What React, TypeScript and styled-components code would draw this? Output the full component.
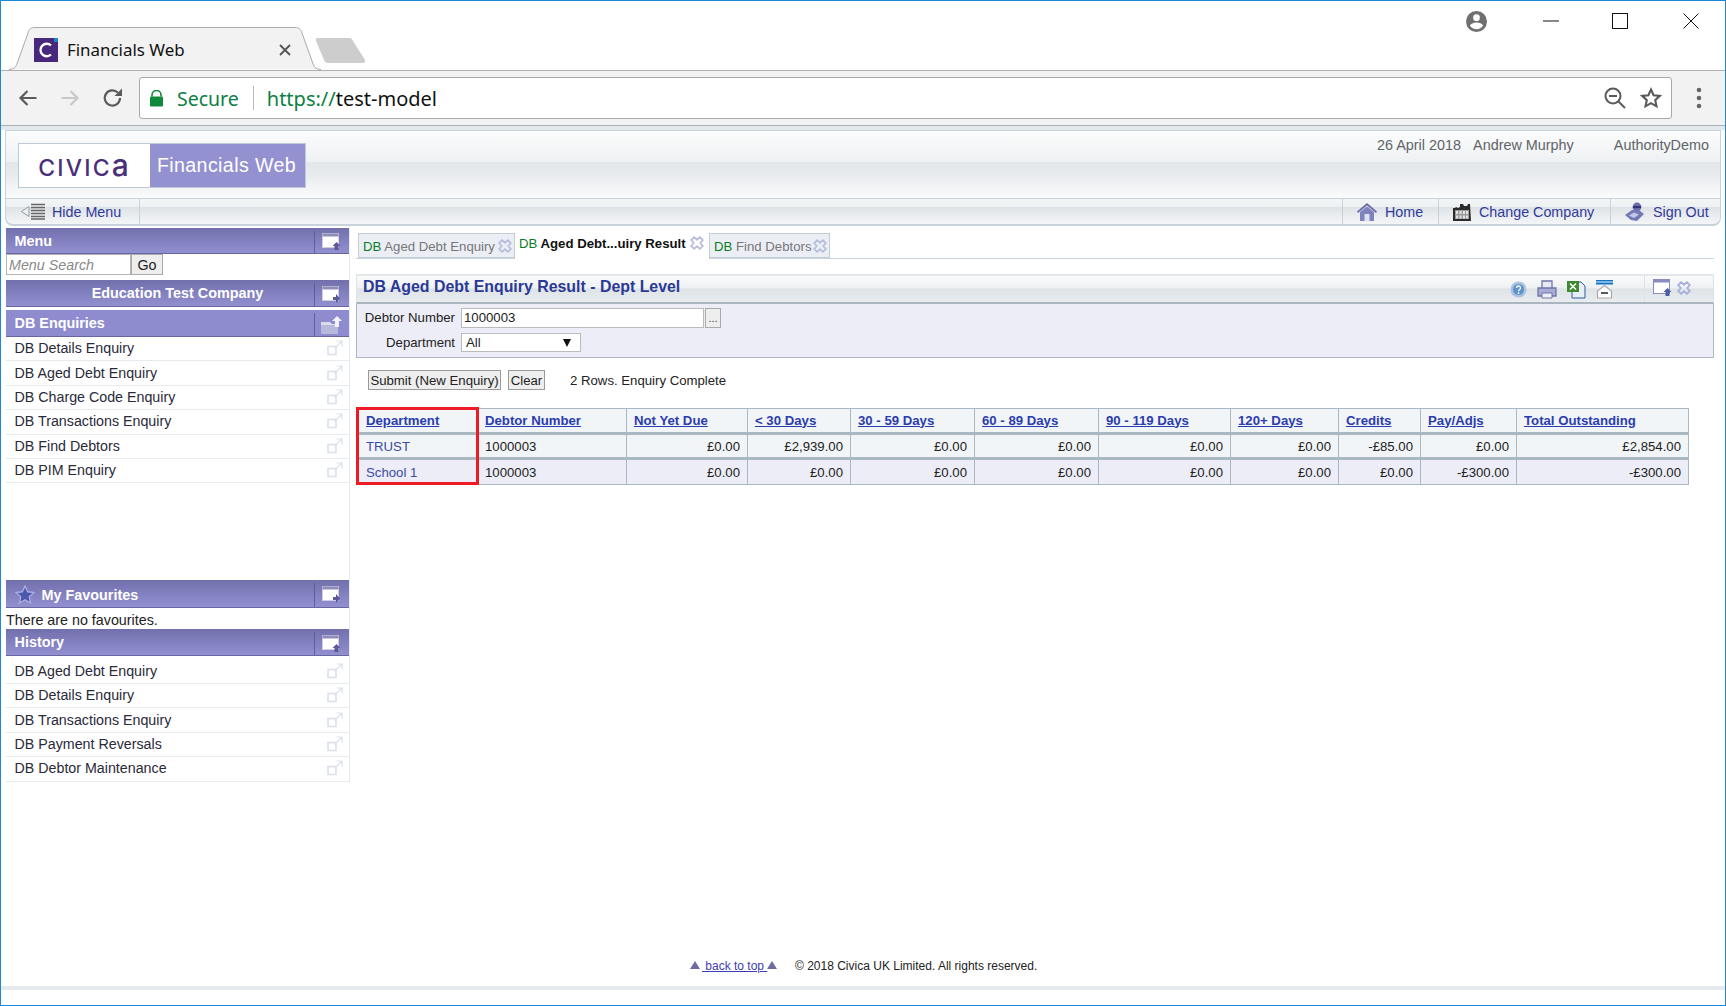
import React from 'react';
import styled, { createGlobalStyle } from 'styled-components';

const Global = createGlobalStyle`
  html, body { margin: 0; padding: 0; background: #fff; }
  body { font-family: "Liberation Sans", Arial, sans-serif; font-size: 13.2px; color: #222; }
  * { box-sizing: border-box; }
`;

const Frame = styled.div`
  width: 1726px; height: 1006px; border: 1px solid #1e88d8;
  display: flex; flex-direction: column; overflow: hidden; background: #fff;
`;
const TitleBar = styled.div`
  height: 69px; flex: none; display: flex; align-items: flex-end; padding-left: 8px; position: relative;
`;
const Tab = styled.div`
  width: 312px; height: 43px; display: flex; align-items: center; gap: 9px; padding: 2px 30px 0 25px; position: relative;
  font-family: "Noto Sans", sans-serif; font-size: 16.9px; color: #111;
  & > svg.shape { position: absolute; left: 0; top: 0; }
  & > *:not(.shape) { position: relative; }
`;
const TabTitle = styled.span` flex: 1; white-space: nowrap; `;
const NewTab = styled.div`
  width: 51px; height: 26px; margin: 0 0 6px -6px;
  & svg { display: block; }
`;
const WindowControls = styled.div`
  margin-left: auto; align-self: flex-start; display: flex; align-items: center; height: 40px; padding-right: 26px;
`;
const WinBtn = styled.div<{ $ml: number }>` margin-left: ${p => p.$ml}px; height: 16px; display: flex; align-items: center; `;

const Toolbar = styled.div`
  height: 56px; flex: none; background: #f2f2f2; border-top: 1px solid #b0b0b0; border-bottom: 1px solid #b0b0b0;
  display: flex; align-items: center; padding: 0 18px 0 17px;
`;
const NavIcons = styled.div` display: flex; align-items: center; gap: 22px; width: 121px; `;
const Omnibox = styled.div`
  width: 1533px; height: 42px; background: #fff; border: 1px solid #a9a9a9; border-radius: 3px;
  display: flex; align-items: center; padding: 0 8px 0 10px; font-family: "Noto Sans", sans-serif; font-size: 19.5px;
`;
const Secure = styled.span` color: #0b8043; margin-left: 14px; `;
const Sep = styled.span` width: 1px; height: 24px; background: #bbb; margin: 0 13px 0 14px; `;
const Scheme = styled.span` color: #0b8043; font-size: 20px; `;
const Url = styled.span` color: #111; flex: 1; font-size: 20px; `;
const OmniIcons = styled.div` display: flex; align-items: center; gap: 14px; margin-right: 1px; `;
const Dots = styled.div` margin-left: 24px; display: flex; `;

const Page = styled.div`
  flex: 1; min-height: 0; display: flex; flex-direction: column; padding: 4px 4px 0 4px;
  background: linear-gradient(#e3e8ec 0, #e3e8ec 4px, #fff 4px);
`;
const AppHeader = styled.div`
  height: 68px; flex: none; border: 1px solid #c7d2da; border-bottom: none;
  background: linear-gradient(#fbfcfc 0, #eef1f3 47%, #e2e6e9 47%, #e8ebee 65%, #fafbfb 100%);
  display: flex; padding: 5px 11px 0 12px; justify-content: space-between;
`;
const LogoBox = styled.div`
  display: flex; width: 288px; height: 45px; margin-top: 7px; border: 1px solid #c0cad6;
`;
const LogoWhite = styled.div`
  width: 131px; background: #fff; display: flex; align-items: baseline; justify-content: center; padding: 4px 2px 0 0;
  font-family: Inter, sans-serif; font-weight: 500; font-size: 23px; letter-spacing: 2.2px; color: #4a2f78; line-height: 34px;
`;
const LogoA = styled.span` font-size: 30px; letter-spacing: 0; `;
const LogoPurple = styled.div`
  flex: 1; background: #9391cf; color: #fff; display: flex; align-items: center; justify-content: center; font-size: 19.6px; letter-spacing: .4px; padding-right: 2px;
`;
const Meta = styled.div` display: flex; font-size: 14.4px; color: #5f6468; padding-top: 1px; height: 18px; `;
const MetaItem = styled.span<{ $ml: number }>` margin-left: ${p => p.$ml}px; `;

const NavBar = styled.div`
  height: 28px; flex: none; display: flex; justify-content: space-between; border: 1px solid #c7d2da; border-width: 1px 1px 2px 1px;
  border-radius: 0 0 8px 8px; font-size: 14.3px; color: #2f3a9a;
  background: linear-gradient(#f3f5f6 0, #eef1f3 30%, #dde2e6 34%, #e8ebee 60%, #f3f5f7 100%);
`;
const NavGroup = styled.div` display: flex; `;
const NavLink = styled.div<{ $w: number; $left?: boolean }>`
  width: ${p => p.$w}px; display: flex; align-items: center; gap: ${p => (p.$left ? 6 : 8)}px; padding-left: 14px;
  border-left: ${p => (p.$left ? 'none' : '1px solid #c7d2da')};
  border-right: ${p => (p.$left ? '1px solid #c7d2da' : 'none')};
  white-space: nowrap;
`;

const Body = styled.div` flex: 1; min-height: 0; display: flex; `;
const Sidebar = styled.div`
  width: 344px; flex: none; padding-top: 2px; align-self: flex-start; border-right: 1px solid #e6ebee; margin-left: 1px;
`;
const PanelHead = styled.div<{ $flat?: boolean; $h?: number; $mt?: number }>`
  height: ${p => p.$h ?? 27}px; margin-top: ${p => p.$mt ?? 0}px;
  display: grid; grid-template-columns: 1fr 35px; align-items: stretch; color: #fff; font-weight: bold; font-size: 14.4px;
  background: ${p => (p.$flat ? '#8e8cce' : 'linear-gradient(#726fad, #9290d0)')};
  border-bottom: 1px solid #68669f;
  position: relative;
`;
const HeadText = styled.div<{ $center?: boolean; $low?: boolean }>`
  display: flex; align-items: center; gap: 7px; padding-left: ${p => (p.$center ? 0 : 8.5)}px; padding-top: ${p => (p.$low ? 2 : 0)}px;
  justify-content: ${p => (p.$center ? 'center' : 'flex-start')};
  margin-right: ${p => (p.$center ? -35 : 0)}px;
`;
const HeadIcon = styled.div`
  border-left: 1px solid #5f5d9c; display: flex; align-items: center; justify-content: center; margin: 3px 0 0 0;
  z-index: 1;
`;
const SearchRow = styled.div` display: flex; height: 26px; `;
const SearchInput = styled.input`
  width: 125px; height: 21px; border: 1px solid #b4b4b4; padding: 0 2px; font: italic 14.3px "Liberation Sans", sans-serif; background: #fff; outline: none;
  &::placeholder { color: #8a8a8a; opacity: 1; }
`;
const GoBtn = styled.button`
  width: 32px; height: 21px; border: 1px solid #aaa; background: #eee; padding: 0; font: 14.3px "Liberation Sans", sans-serif; color: #222;
`;
const Item = styled.div<{ $first?: boolean }>`
  height: ${p => (p.$first ? 27.6 : 24.4)}px; border-bottom: 1px solid #e6ebee; display: flex; align-items: center; justify-content: space-between;
  padding: ${p => (p.$first ? 3 : 0)}px 6px 1px 8.5px; color: #2a2a3a; font-size: 14.25px; white-space: nowrap;
`;
const NoFav = styled.div` height: 21px; line-height: 24px; font-size: 14.3px; color: #222; `;

const Content = styled.div` flex: 1; min-width: 0; padding: 7px 7px 0 6px; `;
const Tabs = styled.div` height: 26px; display: flex; border-bottom: 1px solid #c9d3da; padding-left: 2px; `;
const DocTab = styled.div<{ $active?: boolean; $w: number }>`
  width: ${p => p.$w}px; height: ${p => (p.$active ? 26 : 25)}px; display: flex; align-items: center; justify-content: space-between;
  padding: ${p => (p.$active ? '0 5px 6px 4px' : '1px 2px 0 4px')};
  background: ${p => (p.$active ? '#fff' : '#eceef6')};
  border: ${p => (p.$active ? 'none' : '1px solid #c3cdd6')};
  color: ${p => (p.$active ? '#111' : '#777')};
  font-weight: ${p => (p.$active ? 'bold' : 'normal')};
  font-size: 13.2px; white-space: nowrap;
  & b { color: #0a7d1e; font-weight: normal; }
`;
const TitleRow = styled.div`
  margin-top: 15px; height: 30px; display: flex; align-items: stretch; justify-content: space-between; border-top: 2px solid #e3e8ea;
  border-bottom: 2px solid #aab6bf; border-left: 1px solid #dde2e6; border-right: 1px solid #dde2e6;
  background: linear-gradient(#fafbfb, #eef1f2 45%, #dee3e5 50%, #eaedef 100%);
`;
const PanelTitle = styled.div` color: #2b3996; font-weight: bold; font-size: 15.9px; padding-left: 6px; display: flex; align-items: center; padding-bottom: 4px; `;
const TitleIcons = styled.div` display: flex; align-items: center; `;
const IconGroup = styled.div` display: flex; align-items: center; gap: 10px; padding-right: 31px; `;
const IconGroup2 = styled.div` display: flex; align-items: center; gap: 4px; border-left: 1px solid #dde2e6; height: 100%; padding: 0 22px 2px 8px; `;
const FormPanel = styled.div`
  height: 54px; background: #ecedf6; border: 1px solid #aab8c2; border-top: none; padding: 4px 0 0 0;
  display: grid; grid-template-columns: 98px 1fr; row-gap: 6px; grid-auto-rows: 19px; align-items: center;
`;
const Label = styled.div` text-align: right; color: #222; font-size: 13.2px; white-space: nowrap; `;
const Field = styled.div` display: flex; padding-left: 6px; `;
const TextBox = styled.input`
  width: 243px; height: 20px; border: 1px solid #bbb; background: #fff; padding: 0 2px; font: 13.2px "Liberation Sans", sans-serif; color: #222; outline: none;
`;
const Lookup = styled.button`
  width: 16px; height: 20px; margin-left: 1px; border: 1px solid #aaa; background: #eee; padding: 0; font: 11px "Liberation Sans", sans-serif; color: #444;
`;
const SelectBox = styled.div`
  width: 120px; height: 19px; border: 1px solid #bbb; background: #fff; display: flex; align-items: center; justify-content: space-between; padding: 0 9px 0 4px; font-size: 13.2px;
`;
const Arrow = styled.span` width: 0; height: 0; border-left: 4.5px solid transparent; border-right: 4.5px solid transparent; border-top: 8px solid #111; `;
const Actions = styled.div` margin-top: 12px; height: 20px; display: flex; align-items: center; padding-left: 12px; `;
const PlainBtn = styled.button<{ $w: number; $ml?: number }>`
  width: ${p => p.$w}px; height: 20px; margin-left: ${p => p.$ml ?? 0}px; border: 1px solid #9a9a9a; background: #eee; padding: 0; white-space: nowrap;
  font: 13.2px "Liberation Sans", sans-serif; color: #222;
`;
const Status = styled.span` margin-left: 25px; font-size: 13.2px; color: #222; `;
const TableWrap = styled.div` position: relative; margin: 18px 0 0 2px; width: 1330px; `;
const RedBox = styled.div` position: absolute; left: -2px; top: -1px; width: 123px; height: 78px; border: 3px solid #ed1c24; pointer-events: none; `;
const Grid = styled.table` border-collapse: collapse; table-layout: fixed; width: 1330px; font-size: 13.2px; `;
const Col = styled.col<{ $w: number }>` width: ${p => p.$w}px; `;
const Th = styled.th`
  height: 25px; background: #f2f5f7; border: 1px solid #aab8c2; border-bottom: 3px solid #aab8c2; padding: 0 0 1px 7px; text-align: left; font-weight: bold;
  color: #2b3cae; text-decoration: underline; white-space: nowrap;
`;
const Td = styled.td<{ $even?: boolean; $right?: boolean; $link?: boolean }>`
  height: ${p => (p.$even ? 26 : 25)}px; background: ${p => (p.$even ? '#ecedf6' : '#f2f5f7')}; border: 1px solid #aab8c2; padding: ${p => (p.$right ? '0 7px 0 0' : '0 0 0 7px')};
  text-align: ${p => (p.$right ? 'right' : 'left')}; color: ${p => (p.$link ? '#3d4aa8' : '#222')}; white-space: nowrap;
`;
const ThickTr = styled.tr` & > td { border-bottom-width: 3px; } `;
const Footer = styled.div`
  flex: none; height: 27px; display: flex; align-items: flex-start; font-size: 12px; color: #222; padding-left: 685px;
`;
const BackTop = styled.div` display: flex; align-items: center; height: 14px; color: #3d3db0; width: 105px; `;
const BackLink = styled.span` text-decoration: underline; margin: 0 0 0 2px; white-space: pre; `;
const Tri = styled.span` width: 0; height: 0; border-left: 5.5px solid transparent; border-right: 5.5px solid transparent; border-bottom: 8px solid #6e6aa6; margin-bottom: 3px; `;
const Band = styled.div` height: 4px; flex: none; background: #e6eaed; margin: 0 -4px 15px -4px; `;

const ArrowNav = ({ color, flip }: { color: string; flip?: boolean }) => (
  <svg width="20" height="20" viewBox="0 0 20 20">
    <path d={flip ? 'M1.500 10H17M10.500 3l7 7-7 7' : 'M18.500 10H3M9.500 3L2.500 10l7 7'} fill="none" stroke={color} strokeWidth="2.2" />
  </svg>
);
const WinIcon = ({ up, dark }: { up?: boolean; dark?: boolean }) => (
  <svg width="20" height="18" viewBox="0 0 20 18">
    <rect x="0.5" y="0.5" width="16" height="14" fill="#fff" stroke={dark ? '#8b8bc0' : '#cfcfe4'} />
    <rect x="0.5" y="0.5" width="16" height="3" fill={dark ? '#8b8bc0' : '#8f8eb6'} />
    <path d={up ? 'M14.500 9l4 4h-2v4h-4v-4h-2z' : 'M11 11h3v-3l4 4.500-4 4.500v-3h-3z'} fill={dark ? '#4c5ea0' : '#5c5a96'} />
  </svg>
);
const Ext = () => (
  <svg width="16" height="16" viewBox="0 0 16 16" fill="none" stroke="#dbe1e9" strokeWidth="1.600">
    <rect x="1" y="6.500" width="8" height="8" />
    <path d="M7.500 8.500L15 1M9.500 1H15V6.500" strokeWidth="1.200" />
  </svg>
);
const CloseX = ({ color = '#b6bedc' }: { color?: string }) => (
  <svg width="14" height="14" viewBox="0 0 12 12" fill="none" stroke={color} strokeWidth="1.500"><path d="M3.500 1L6 3.200 8.500 1 11 3.500 8.800 6 11 8.500 8.500 11 6 8.800 3.500 11 1 8.500 3.200 6 1 3.500z" /></svg>
);
const items = ['DB Details Enquiry', 'DB Aged Debt Enquiry', 'DB Charge Code Enquiry', 'DB Transactions Enquiry', 'DB Find Debtors', 'DB PIM Enquiry'];
const history = ['DB Aged Debt Enquiry', 'DB Details Enquiry', 'DB Transactions Enquiry', 'DB Payment Reversals', 'DB Debtor Maintenance'];
const widths = [119, 149, 121, 103, 124, 124, 132, 108, 82, 96, 172];
const heads = ['Department', 'Debtor Number', 'Not Yet Due', '< 30 Days', '30 - 59 Days', '60 - 89 Days', '90 - 119 Days', '120+ Days', 'Credits', 'Pay/Adjs', 'Total Outstanding'];
const rows = [
  ['TRUST', '1000003', '£0.00', '£2,939.00', '£0.00', '£0.00', '£0.00', '£0.00', '-£85.00', '£0.00', '£2,854.00'],
  ['School 1', '1000003', '£0.00', '£0.00', '£0.00', '£0.00', '£0.00', '£0.00', '£0.00', '-£300.00', '-£300.00'],
];

export default function App() {
  return (
    <Frame>
      <Global />
      <TitleBar>
        <Tab>
          <svg className="shape" width="312" height="43" viewBox="0 0 312 43">
            <path d="M0 42.500C6 42 7 40 9 34L19 6C20 2 22 0.500 26 0.500H286C290 0.500 292 2 293 6L303 34C305 40 306 42 312 42.500" fill="#f2f2f2" stroke="#aaa" />
          </svg>
          <svg width="24" height="24" viewBox="0 0 24 24">
            <rect width="24" height="24" fill="#47287c" />
            <rect x="20" width="4" height="4" fill="#1a86c8" />
            <path d="M17 7.500A6.200 6.200 0 1 0 17 16.500" fill="none" stroke="#fff" strokeWidth="2.400" />
          </svg>
          <TabTitle>Financials Web</TabTitle>
          <svg width="12" height="12" viewBox="0 0 12 12"><path d="M1 1l10 10M11 1L1 11" stroke="#555" strokeWidth="1.800" /></svg>
        </Tab>
        <NewTab>
          <svg width="51" height="26" viewBox="0 0 51 26"><path d="M3 0H34Q37 0 38 3L50 22Q51 25 47 25H13Q10 25 9 22L1 3Q0 0 3 0z" fill="#cdcdcd" /></svg>
        </NewTab>
        <WindowControls>
          <svg width="21" height="21" viewBox="0 0 20 20">
            <path d="M10 0a10 10 0 1 0 0 20a10 10 0 0 0 0-20zm0 3.200a3.200 3.200 0 1 1 0 6.400a3.200 3.200 0 0 1 0-6.400zm0 14.200a7.400 7.400 0 0 1-6.200-3.300c.1-2 4.100-3.200 6.200-3.200s6.100 1.100 6.200 3.200a7.400 7.400 0 0 1-6.200 3.300z" fill="#6f6f6f" />
          </svg>
          <WinBtn $ml={56}><svg width="16" height="2" viewBox="0 0 16 2"><path d="M0 1h16" stroke="#111" strokeWidth="1" /></svg></WinBtn>
          <WinBtn $ml={53}><svg width="16" height="16" viewBox="0 0 16 16"><rect x="0.500" y="0.500" width="15" height="15" fill="none" stroke="#111" /></svg></WinBtn>
          <WinBtn $ml={55}><svg width="16" height="16" viewBox="0 0 16 16"><path d="M0.500 0.500l15 15M15.500 0.500l-15 15" stroke="#111" /></svg></WinBtn>
        </WindowControls>
      </TitleBar>
      <Toolbar>
        <NavIcons>
          <ArrowNav color="#5a5a5a" />
          <ArrowNav color="#c9c9c9" flip />
          <svg width="22" height="22" viewBox="0 0 22 22">
            <path d="M18 11a7.600 7.600 0 1 1-2.200-5.400" fill="none" stroke="#5a5a5a" strokeWidth="2.200" />
            <path d="M20 1.500V9h-7.500z" fill="#5a5a5a" />
          </svg>
        </NavIcons>
        <Omnibox>
          <svg width="13" height="17" viewBox="0 0 13 17">
            <path d="M2 6.500V5a4.500 4.500 0 0 1 9 0v1.500" fill="none" stroke="#0f8a3a" strokeWidth="1.600" />
            <rect y="6.500" width="13" height="10" rx="1" fill="#0f8a3a" />
          </svg>
          <Secure>Secure</Secure>
          <Sep />
          <Scheme>https://</Scheme>
          <Url>test-model</Url>
          <OmniIcons>
            <svg width="22" height="22" viewBox="0 0 22 22" fill="none" stroke="#5a5a5a" strokeWidth="2">
              <circle cx="9" cy="9" r="7.500" /><path d="M14.500 14.500L21 21" /><path d="M5 9h8" />
            </svg>
            <svg width="22" height="22" viewBox="0 0 22 22" fill="none" stroke="#5a5a5a" strokeWidth="2.100">
              <path d="M11 2.500l2.600 5.700 6.200.7-4.600 4.200 1.300 6.200-5.500-3.100-5.500 3.100 1.300-6.200-4.600-4.200 6.200-.7z" />
            </svg>
          </OmniIcons>
        </Omnibox>
        <Dots>
          <svg width="6" height="22" viewBox="0 0 6 22"><circle cx="3" cy="3" r="2.300" fill="#666" /><circle cx="3" cy="11" r="2.300" fill="#666" /><circle cx="3" cy="19" r="2.300" fill="#666" /></svg>
        </Dots>
      </Toolbar>
      <Page>
        <AppHeader>
          <LogoBox>
            <LogoWhite>CIVIC<LogoA>a</LogoA></LogoWhite>
            <LogoPurple>Financials Web</LogoPurple>
          </LogoBox>
          <Meta>
            <MetaItem $ml={0}>26 April 2018</MetaItem>
            <MetaItem $ml={12}>Andrew Murphy</MetaItem>
            <MetaItem $ml={40}>AuthorityDemo</MetaItem>
          </Meta>
        </AppHeader>
        <NavBar>
          <NavLink $w={134} $left>
            <svg width="26" height="17" viewBox="0 0 26 17" fill="none">
              <path d="M9 3.500L1.500 8.500 9 13.500z" fill="#edf0f2" stroke="#9a9a9a" />
              <path d="M11 1.500h14M11 4.500h14M11 7.500h14M11 10.500h14M11 13.500h14M11 16h14" stroke="#666" strokeWidth="1.700" />
            </svg>
            Hide Menu
          </NavLink>
          <NavGroup>
            <NavLink $w={96}>
              <svg width="20" height="18" viewBox="0 0 20 18">
                <path d="M10 0L0 8.500l1 1.500 9-7.500 9 7.500 1-1.500z" fill="#6a6cab" />
                <path d="M3 9l7-5.500L17 9v9h-5v-6H8v6H3z" fill="#7f83bd" />
                <path d="M7.500 11h5v7h-5z" fill="#dfe2f2" />
              </svg>
              Home
            </NavLink>
            <NavLink $w={172}>
              <svg width="18" height="18" viewBox="0 0 18 18">
                <path d="M0 5h2l1-1 2 1 2-1V1h3l1 2h3l1-2h2l1 17H0z" fill="#2b2b2b" />
                <path d="M2 7h14v9H2z" fill="#9b9b9b" />
                <path d="M3 8h2v3H3zM6.500 8h2v3h-2zM10 8h2v3h-2zM13 8h2v3h-2zM3 12.500h2v3H3zM6.500 12.500h2v3h-2zM10 12.500h2v3h-2zM13 12.500h2v3h-2z" fill="#e3e3e3" />
              </svg>
              Change Company
            </NavLink>
            <NavLink $w={110}>
              <svg width="20" height="20" viewBox="0 0 20 20">
                <circle cx="12" cy="5" r="4.400" fill="#6a6cab" />
                <path d="M8 4h8v2H8z" fill="#2e3578" />
                <path d="M0 13l7-5h7l5 4-7 7-6-1z" fill="#7478b5" />
                <path d="M4 13.500l5-3 5 2-5 3.500z" fill="#c3c7e6" />
              </svg>
              Sign Out
            </NavLink>
          </NavGroup>
        </NavBar>
        <Body>
          <Sidebar>
            <PanelHead $h={26}><HeadText>Menu</HeadText><HeadIcon><WinIcon up /></HeadIcon></PanelHead>
            <SearchRow><SearchInput placeholder="Menu Search" readOnly /><GoBtn>Go</GoBtn></SearchRow>
            <PanelHead>
              <HeadText $center>Education Test Company</HeadText>
              <HeadIcon><WinIcon /></HeadIcon>
            </PanelHead>
            <PanelHead $flat $mt={3}>
              <HeadText>DB Enquiries</HeadText>
              <HeadIcon>
                <svg width="22" height="18" viewBox="0 0 22 18">
                  <path d="M0 6h9l2 2h6v10H0z" fill="#d9dcee" />
                  <path d="M0 9h17v9H0z" fill="#b6b9dc" />
                  <path d="M16 0l5 5h-3v6h-4V5h-3z" fill="#f3f4fb" />
                </svg>
              </HeadIcon>
            </PanelHead>
            {items.map(t => <Item key={t}>{t}<Ext /></Item>)}
            <PanelHead $mt={97} $h={28}>
              <HeadText $low>
                <svg width="20" height="19" viewBox="0 0 20 19"><path d="M10 1l2.700 5.800 6.300.7-4.700 4.300 1.300 6.200-5.600-3.200L4.400 18l1.300-6.200L1 7.500l6.300-.7z" fill="#4d57ad" stroke="#a9aee0" strokeWidth="1.400" /></svg>
                My Favourites
              </HeadText>
              <HeadIcon><WinIcon /></HeadIcon>
            </PanelHead>
            <NoFav>There are no favourites.</NoFav>
            <PanelHead $h={27}><HeadText>History</HeadText><HeadIcon><WinIcon up /></HeadIcon></PanelHead>
            {history.map((t, i) => <Item key={t} $first={i === 0}>{t}<Ext /></Item>)}
          </Sidebar>
          <Content>
            <Tabs>
              <DocTab $w={157}><span><b>DB</b> Aged Debt Enquiry</span><CloseX /></DocTab>
              <DocTab $w={194} $active><span><b>DB</b> Aged Debt...uiry Result</span><CloseX /></DocTab>
              <DocTab $w={121}><span><b>DB</b> Find Debtors</span><CloseX /></DocTab>
            </Tabs>
            <TitleRow>
              <PanelTitle>DB Aged Debt Enquiry Result - Dept Level</PanelTitle>
              <TitleIcons>
                <IconGroup>
                  <svg width="17" height="17" viewBox="0 0 17 17">
                    <circle cx="8.500" cy="8.500" r="8" fill="#a9c3e0" /><circle cx="8.500" cy="8.500" r="5.500" fill="#5f92c8" />
                    <path d="M6.500 7a2 2 0 1 1 3 1.700c-.8.500-1 .8-1 1.500" fill="none" stroke="#fff" strokeWidth="1.300" /><circle cx="8.500" cy="12.200" r=".9" fill="#fff" />
                  </svg>
                  <svg width="20" height="19" viewBox="0 0 20 19">
                    <path d="M5 8V1h10v7" fill="#e8eaf3" stroke="#7074aa" strokeWidth="1.300" />
                    <path d="M1 8h18v8H1z" fill="#a9acd2" stroke="#7074aa" strokeWidth="1.300" />
                    <path d="M5 13h10v5H5z" fill="#eef0f8" stroke="#7074aa" />
                  </svg>
                  <svg width="19" height="19" viewBox="0 0 19 19">
                    <path d="M5 2h9l4 4v12H5z" fill="#e8eef8" stroke="#2f5c9a" />
                    <path d="M0 1h12v11H0z" fill="#3f8a2f" />
                    <path d="M3 3.500l6 6M9 3.500l-6 6" stroke="#fff" strokeWidth="1.500" />
                  </svg>
                  <svg width="17" height="19" viewBox="0 0 17 19">
                    <path d="M0 .5h17M0 3.500h17" stroke="#0f74c9" strokeWidth="2" />
                    <path d="M1.500 18V11L8.500 5.500 15.500 11v7z" fill="#fff" stroke="#aaa" strokeWidth="1.200" />
                    <path d="M5 13h7" stroke="#222" strokeWidth="1.500" />
                  </svg>
                </IconGroup>
                <IconGroup2>
                  <WinIcon up dark />
                  <CloseX color="#a9addb" />
                </IconGroup2>
              </TitleIcons>
            </TitleRow>
            <FormPanel>
              <Label>Debtor Number</Label>
              <Field><TextBox value="1000003" readOnly /><Lookup>...</Lookup></Field>
              <Label>Department</Label>
              <Field><SelectBox>All<Arrow /></SelectBox></Field>
            </FormPanel>
            <Actions>
              <PlainBtn $w={133}>Submit (New Enquiry)</PlainBtn>
              <PlainBtn $w={37} $ml={7}>Clear</PlainBtn>
              <Status>2 Rows. Enquiry Complete</Status>
            </Actions>
            <TableWrap>
              <Grid>
                <colgroup>{widths.map((w, i) => <Col key={i} $w={w} />)}</colgroup>
                <thead><tr>{heads.map(h => <Th key={h}>{h}</Th>)}</tr></thead>
                <tbody>
                  <ThickTr>{rows[0].map((c, i) => <Td key={i} $right={i > 1} $link={i === 0}>{c}</Td>)}</ThickTr>
                  <tr>{rows[1].map((c, i) => <Td key={i} $even $right={i > 1} $link={i === 0}>{c}</Td>)}</tr>
                </tbody>
              </Grid>
              <RedBox />
            </TableWrap>
          </Content>
        </Body>
        <Footer>
          <BackTop><Tri /><BackLink> back to top </BackLink><Tri /></BackTop>
          <span>© 2018 Civica UK Limited. All rights reserved.</span>
        </Footer>
        <Band />
      </Page>
    </Frame>
  );
}
